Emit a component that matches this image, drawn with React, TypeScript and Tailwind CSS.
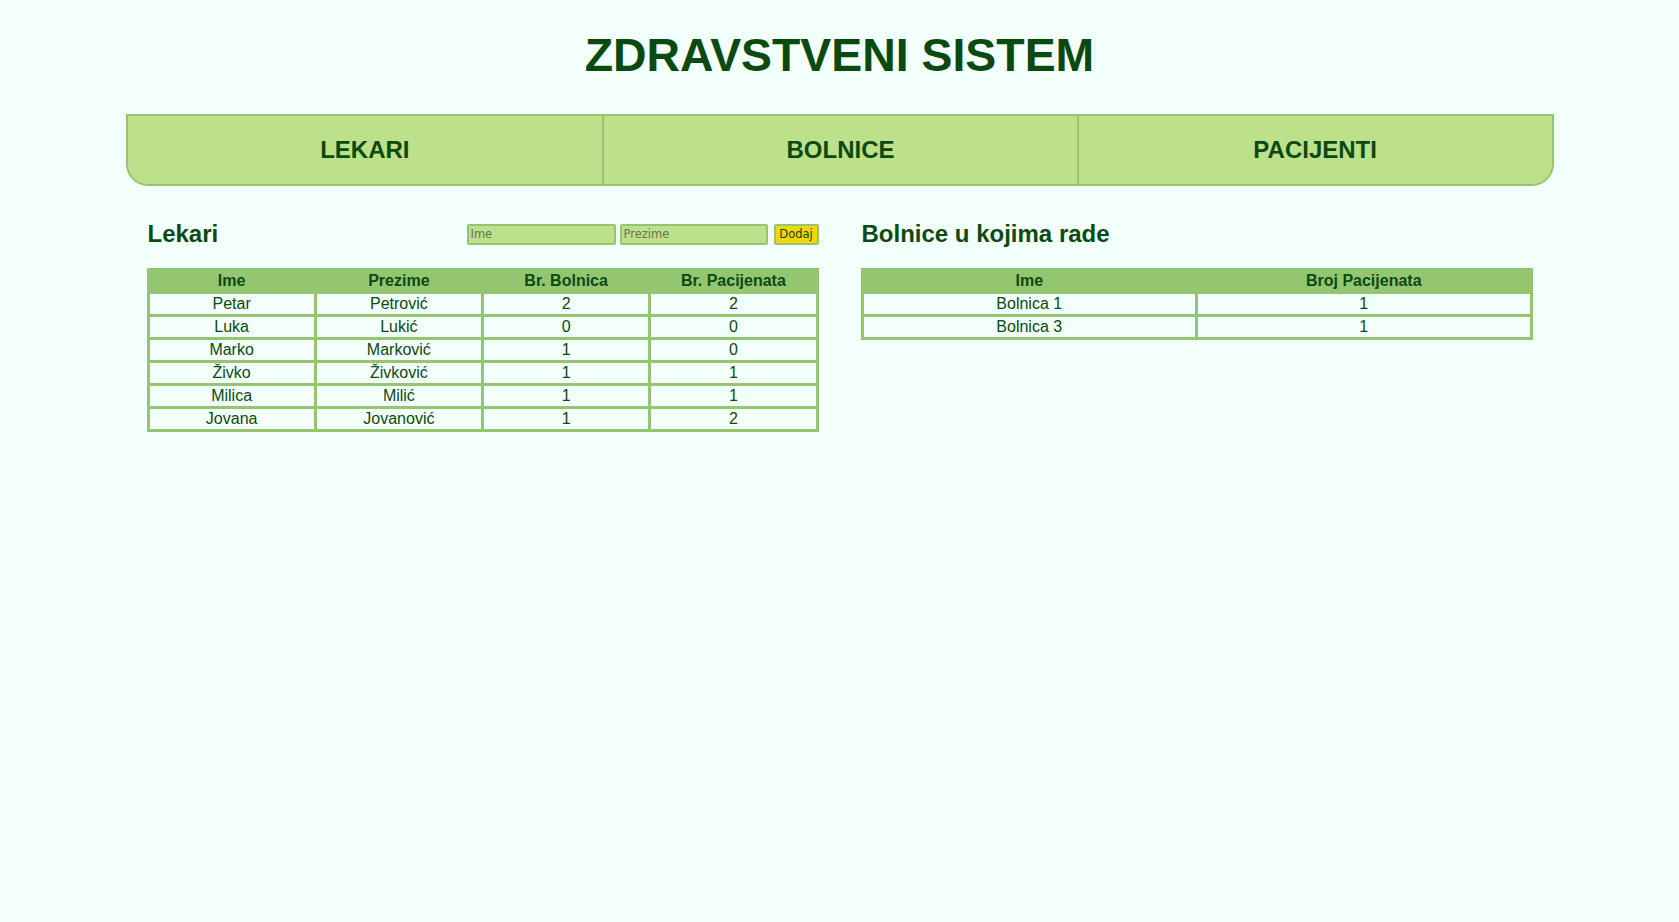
import React from "react";

const lekari = [
  ["Petar", "Petrović", "2", "2"],
  ["Luka", "Lukić", "0", "0"],
  ["Marko", "Marković", "1", "0"],
  ["Živko", "Živković", "1", "1"],
  ["Milica", "Milić", "1", "1"],
  ["Jovana", "Jovanović", "1", "2"],
];

const bolnice = [
  ["Bolnica 1", "1"],
  ["Bolnica 3", "1"],
];

function DataTable({ head, rows }: { head: string[]; rows: string[][] }) {
  return (
    <table className="w-full table-fixed border-collapse border-[3px] border-[#94c672] text-[16px] text-[#0b4a10]">
      <thead>
        <tr className="bg-[#94c672]">
          {head.map((h) => (
            <th key={h} className="border-[3px] border-[#94c672] p-0 h-[20px] leading-[20px] font-bold text-center">
              {h}
            </th>
          ))}
        </tr>
      </thead>
      <tbody>
        {rows.map((r, i) => (
          <tr key={i}>
            {r.map((c, j) => (
              <td key={j} className="border-[3px] border-[#94c672] p-0 h-[20px] leading-[20px] text-center">
                {c}
              </td>
            ))}
          </tr>
        ))}
      </tbody>
    </table>
  );
}

export default function App() {
  return (
    <div
      className="min-h-[922px] w-full bg-[#f3fffb] text-[#0b4a10]"
      style={{ fontFamily: '"Liberation Sans", Arial, sans-serif' }}
    >
      <h1 className="pt-[29px] text-center text-[46.4px] leading-[52px] font-bold text-[#0b4a0e]">
        ZDRAVSTVENI SISTEM
      </h1>

      <nav className="mx-auto mt-[33px] grid h-[72px] w-[1428px] grid-cols-3 rounded-b-[22px] border-2 border-[#94c672] bg-[#bde08a]">
        <div className="flex items-center justify-center text-[24px] font-bold">LEKARI</div>
        <div className="flex items-center justify-center border-l-2 border-[#94c672] text-[24px] font-bold">
          BOLNICE
        </div>
        <div className="flex items-center justify-center border-l-2 border-[#94c672] text-[24px] font-bold">
          PACIJENTI
        </div>
      </nav>

      <div className="mx-auto mt-[34px] grid w-[1428px] grid-cols-2">
        <section className="px-[21px]">
          <div className="flex h-[28px] items-center justify-between">
            <h2 className="pl-[1px] text-[24px] leading-[28px] font-bold">Lekari</h2>
            <div className="flex items-center" style={{ fontFamily: '"DejaVu Sans", Verdana, sans-serif' }}>
              <input
                placeholder="Ime"
                className="h-[21px] w-[149px] rounded-[2px] border-2 border-[#94c672] bg-[#bde08a] px-[2px] text-[11.5px] text-[#0b4a10] outline-none placeholder:text-[#6b7358]"
              />
              <input
                placeholder="Prezime"
                className="ml-[4px] h-[21px] w-[148px] rounded-[2px] border-2 border-[#94c672] bg-[#bde08a] px-[2px] text-[11.5px] text-[#0b4a10] outline-none placeholder:text-[#6b7358]"
              />
              <button className="ml-[6px] h-[21px] w-[45px] rounded-[2px] border-2 border-[#94c672] bg-[#f7d600] p-0 text-[11.5px] leading-[17px] text-[#0b4a10]">
                Dodaj
              </button>
            </div>
          </div>
          <div className="mt-[20px]">
            <DataTable head={["Ime", "Prezime", "Br. Bolnica", "Br. Pacijenata"]} rows={lekari} />
          </div>
        </section>

        <section className="px-[21px]">
          <div className="flex h-[28px] items-center">
            <h2 className="pl-[1px] text-[24px] leading-[28px] font-bold">Bolnice u kojima rade</h2>
          </div>
          <div className="mt-[20px]">
            <DataTable head={["Ime", "Broj Pacijenata"]} rows={bolnice} />
          </div>
        </section>
      </div>
    </div>
  );
}
